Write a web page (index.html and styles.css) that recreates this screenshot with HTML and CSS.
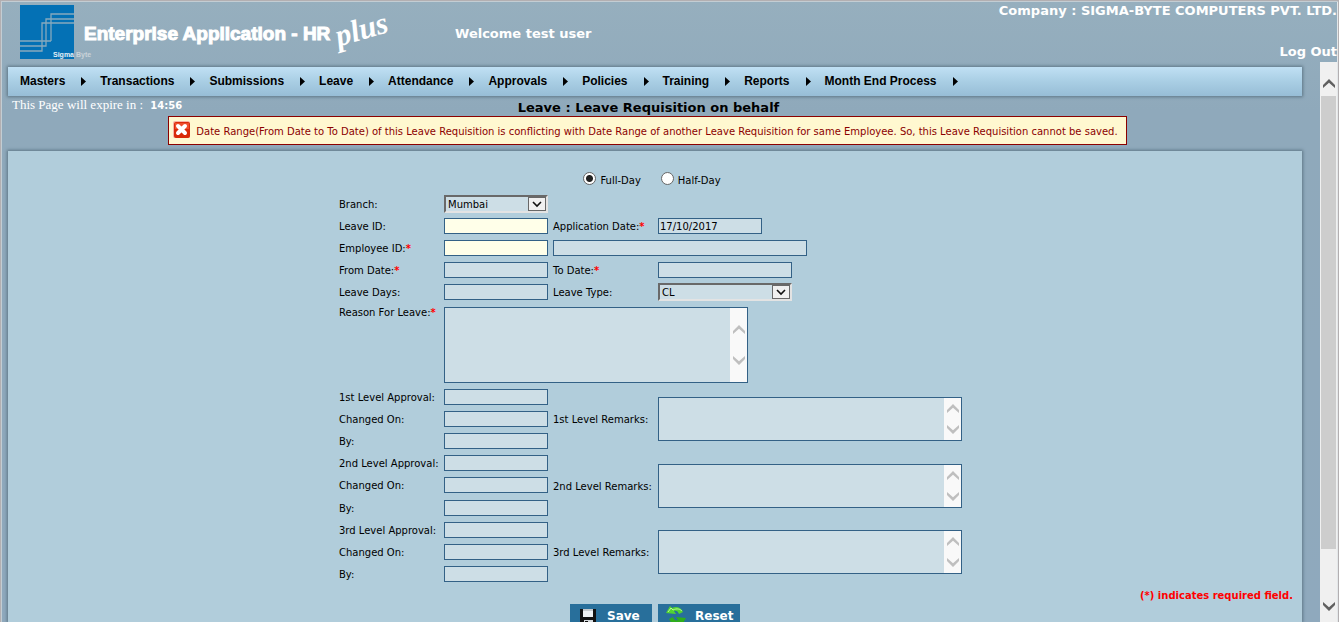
FILE: index.html
```html
<!DOCTYPE html>
<html lang="en">
<head>
<meta charset="utf-8">
<title>Leave Requisition on behalf</title>
<link rel="stylesheet" href="styles.css">
</head>
<body>
<svg class="defs" aria-hidden="true">
  <symbol id="up" viewBox="0 0 12 9"><path d="M0 6 6 0l6 6v3L6 3.800 0 9z"/></symbol>
  <symbol id="down" viewBox="0 0 12 9"><path d="M0 3 6 9l6-6V0L6 5.200 0 0z"/></symbol>
  <symbol id="arrow" viewBox="0 0 5 9"><path d="M0 0v9l5-4.500z"/></symbol>
  <symbol id="chev" viewBox="0 0 18 14"><path d="M0 0h18v14H0z" fill="#686868"/><path d="M1 1h16v12H1z" fill="#f0f0f0"/><path d="m5 5 4 4 4-4" fill="none" stroke="#111" stroke-width="1.600"/></symbol>
</svg>
<div class="frame">
  <header class="header">
    <svg class="logo" viewBox="0 0 54 54" role="img" aria-label="Sigma Byte">
      <path d="M0 0h54v54H0z" fill="#0471b5"/>
      <path d="M0 36h22V18h32M0 41h26V14h28M0 46h22V36M22 46V18M26 41V14M31 36V9h23M0 36h31" fill="none" stroke="#86a9bd" stroke-width="1.300"/>
      <text class="logo-text" x="33" y="52" fill="#e4f0f7">Sigma</text>
      <text class="logo-text" x="56" y="52" fill="#c9d3d9">Byte</text>
    </svg>
    <div class="brand">Enterprise Application - HR</div>
    <div class="plus">plus</div>
    <div class="welcome">Welcome test user</div>
    <div class="account">
      <span>Company : SIGMA-BYTE COMPUTERS PVT. LTD.</span>
      <a href="#">Log Out</a>
    </div>
  </header>
  <div class="body">
    <main class="main">
      <nav class="menu">
        <a href="#">Masters<svg><use href="#arrow"/></svg></a>
        <a href="#">Transactions<svg><use href="#arrow"/></svg></a>
        <a href="#">Submissions<svg><use href="#arrow"/></svg></a>
        <a href="#">Leave<svg><use href="#arrow"/></svg></a>
        <a href="#">Attendance<svg><use href="#arrow"/></svg></a>
        <a href="#">Approvals<svg><use href="#arrow"/></svg></a>
        <a href="#">Policies<svg><use href="#arrow"/></svg></a>
        <a href="#">Training<svg><use href="#arrow"/></svg></a>
        <a href="#">Reports<svg><use href="#arrow"/></svg></a>
        <a href="#">Month End Process<svg><use href="#arrow"/></svg></a>
      </nav>
      <div class="titlebar">
        <div class="expire">This Page will expire in : <b>14:56</b></div>
        <h1>Leave : Leave Requisition on behalf</h1>
      </div>
      <div class="alert-row">
        <div class="alert" role="alert">
          <svg class="alert-icon" viewBox="0 0 17 17"><rect width="17" height="17" rx="2" fill="#f7b2a5"/><rect x="1" y="1" width="16" height="16" rx="2" fill="#d92a08"/><path d="M2 2h14v6H2z" fill="#ee4d2b"/><path d="m5 5 7 7m0-7-7 7" stroke="#fff" stroke-width="4" stroke-linecap="round"/></svg>
          <span>Date Range(From Date to To Date) of this Leave Requisition is conflicting with Date Range of another Leave Requisition for same Employee. So, this Leave Requisition cannot be saved.</span>
        </div>
      </div>
      <form class="panel">
        <div class="radios">
          <label><input type="radio" name="day" checked>Full-Day</label>
          <label><input type="radio" name="day">Half-Day</label>
        </div>
        <div class="fields">
          <label for="branch">Branch:</label>
          <div class="select to-end"><select id="branch"><option>Mumbai</option></select><svg><use href="#chev"/></svg></div>

          <label for="lid">Leave ID:</label><input id="lid" class="cream">
          <label for="adate">Application Date:<i>*</i></label><input id="adate" value="17/10/2017">

          <label for="eid">Employee ID:<i>*</i></label><input id="eid" class="cream">
          <input class="wide" aria-label="Employee name">

          <label for="from">From Date:<i>*</i></label><input id="from">
          <label for="to">To Date:<i>*</i></label><input id="to" class="date">

          <label for="days">Leave Days:</label><input id="days">
          <label for="type">Leave Type:</label>
          <div class="select date"><select id="type"><option>CL</option></select><svg><use href="#chev"/></svg></div>

          <label for="reason" class="top">Reason For Leave:<i>*</i></label>
          <div class="area tall to-end"><textarea id="reason"></textarea><span class="bar"><svg><use href="#up"/></svg><svg><use href="#down"/></svg></span></div>

          <label for="a1">1st Level Approval:</label><input id="a1">
          <label for="r1" class="span3">1st Level Remarks:</label>
          <div class="area span3"><textarea id="r1"></textarea><span class="bar"><svg><use href="#up"/></svg><svg><use href="#down"/></svg></span></div>
          <label for="c1">Changed On:</label><input id="c1">
          <label for="b1">By:</label><input id="b1">

          <label for="a2">2nd Level Approval:</label><input id="a2">
          <label for="r2" class="span3">2nd Level Remarks:</label>
          <div class="area span3"><textarea id="r2"></textarea><span class="bar"><svg><use href="#up"/></svg><svg><use href="#down"/></svg></span></div>
          <label for="c2">Changed On:</label><input id="c2">
          <label for="b2">By:</label><input id="b2">

          <label for="a3">3rd Level Approval:</label><input id="a3">
          <label for="r3" class="span3">3rd Level Remarks:</label>
          <div class="area span3"><textarea id="r3"></textarea><span class="bar"><svg><use href="#up"/></svg><svg><use href="#down"/></svg></span></div>
          <label for="c3">Changed On:</label><input id="c3">
          <label for="b3">By:</label><input id="b3">
        </div>
        <p class="required">(*) indicates required field.</p>
        <div class="actions">
          <button type="button">
            <svg viewBox="0 0 20 20"><path d="M2 3h16v17H2z" fill="#111"/><path d="M5 3h10v8H5z" fill="#eef1f3"/><path d="M5 3h10v2H5z" fill="#c4c9cd"/><path d="M6 14h9v6H6z" fill="#d5d9dc"/><path d="M7 15h3v5H7z" fill="#111"/></svg>
            <span>Save</span>
          </button>
          <button type="button">
            <svg viewBox="0 0 20 20"><path d="M0 7 4 0l2 2c4-2 9-1 11 4l-4 2C12 5 10 4 8 5l2 3z" fill="#52d430"/><path d="M20 12l-4 7-2-2c-4 2-9 1-11-4l4-2c1 3 3 4 5 3l-2-3z" fill="#2fae1b"/><path d="M2 6l3-4 2 2c4-2 7-1 9 1" fill="none" stroke="#b9f59b"/></svg>
            <span>Reset</span>
          </button>
        </div>
      </form>
    </main>
    <div class="scroll" aria-hidden="true">
      <svg><use href="#up"/></svg>
      <span class="thumb"></span>
      <svg><use href="#down"/></svg>
    </div>
  </div>
</div>
</body>
</html>
```

FILE: styles.css
```css
* { box-sizing: border-box; }
body {
  margin: 0;
  font-family: Verdana, "DejaVu Sans", sans-serif;
  font-size: 10px;
  color: #000;
}
.defs { display: none; }
.frame {
  height: 100vh;
  display: flex;
  flex-direction: column;
  overflow: hidden;
  border: 1px solid #b3afb1;
  border-bottom: 0;
  box-shadow: inset 1px 1px #c3cdd3, inset -1px 0 #e3e7e9;
  background: linear-gradient(#96afbe, #8fa9bb 110px, #8fa9bd);
}
.header {
  flex: none;
  display: flex;
  height: 61px;
  padding: 4px 1px 0 19px;
  color: #fff;
  font-weight: bold;
  font-size: 13px;
  white-space: nowrap;
}
.logo { width: 54px; height: 54px; overflow: visible; }
.logo-text { font: bold 7px "Liberation Sans Narrow", "Liberation Sans", sans-serif; }
.brand {
  margin-left: 10px;
  width: 246px;
  line-height: 58px;
  font-family: Impact, "Liberation Sans Narrow", "Liberation Sans", sans-serif;
  font-size: 19px;
  -webkit-text-stroke: 1px #fff;
}
.plus {
  width: 56px;
  margin-left: 6px;
  line-height: 48px;
  font-family: "Brush Script MT", "Liberation Serif", serif;
  font-style: italic;
  font-size: 31px;
  transform: rotate(-16deg);
}
.welcome { margin-left: 63px; line-height: 57px; }
.account {
  margin-left: auto;
  display: flex;
  flex-direction: column;
  align-items: flex-end;
  gap: 25px;
  line-height: 16px;
  margin-top: -2px;
}
.account a { color: inherit; text-decoration: none; }
.body { flex: 1; min-height: 0; display: flex; }
.main {
  flex: 1;
  min-width: 0;
  display: flex;
  flex-direction: column;
  padding: 5px 18px 0 7px;
}
.menu {
  flex: none;
  display: flex;
  gap: 14px;
  height: 29px;
  padding-left: 12px;
  background: linear-gradient(#c0e0f4, #a9cee4 50%, #97bdd6);
  box-shadow: 0 0 3px 1px #5d7686;
  font: bold 12px/28px "Liberation Sans", Arial, sans-serif;
  white-space: nowrap;
}
.menu a { color: #000; text-decoration: none; display: flex; align-items: center; height: 28px; }
.menu svg { width: 5px; height: 9px; margin-left: 16px; }
.titlebar {
  flex: none;
  display: grid;
  grid-template-columns: 1fr auto 1fr;
  height: 20px;
  padding: 0 17px 0 4px;
}
.expire {
  color: #fff;
  font: 13px/18px "Liberation Serif", "Times New Roman", serif;
}
.expire b { margin-left: 4px; font: bold 10px "DejaVu Sans", sans-serif; }
h1 { margin: 0; font-size: 13px; line-height: 24px; }
.alert-row { flex: none; display: flex; justify-content: center; padding-right: 15px; }
.alert {
  display: flex;
  gap: 6px;
  height: 29px;
  padding: 4px 8px 0 4px;
  border: 1px solid #8b0000;
  background: #fff8d0;
  color: #8b0000;
  line-height: 22px;
  white-space: nowrap;
}
.alert-icon { width: 17px; height: 17px; flex: none; }
.panel {
  flex: 1;
  min-height: 0;
  margin-top: 6px;
  padding: 20px 9px 0;
  overflow: hidden;
  background: #b1cddb;
  box-shadow: 0 0 3px 1px #5d7686;
}
.radios { display: flex; justify-content: center; gap: 20px; height: 22px; margin-right: 6px; }
.radios label { display: flex; line-height: 20px; }
.radios input {
  appearance: none;
  width: 13px;
  height: 13px;
  margin: 1px 4px 0 0;
  border: 1px solid #666;
  border-radius: 50%;
  background: #fff;
}
.radios input:checked { background: radial-gradient(circle, #222 3px, #fff 4px); }
.fields {
  display: grid;
  grid-template-columns: 105px 109px 105px 313px;
  grid-template-rows: repeat(5, 22px) 83px repeat(5, 22px) 23px repeat(3, 22px);
  justify-content: center;
  align-items: center;
}
.fields label { padding-top: 2px; line-height: 14px; white-space: nowrap; }
.fields i { color: #f00; font-style: normal; font-weight: bold; }
.fields input {
  width: 104px;
  height: 16px;
  padding: 0 1px;
  border: 1px solid #336186;
  background: #cddee6;
  font: inherit;
  color: #000;
}
.fields .cream { background: #ffffe9; }
.fields .wide { grid-column: 3 / 5; width: 254px; }
.fields .date { width: 134px; }
.to-end { grid-column: 2 / 5; }
.span3 { grid-row: span 3; }
.fields .top { align-self: start; padding-top: 3px; }
.select { position: relative; width: 104px; height: 18px; }
.select select {
  appearance: none;
  display: block;
  width: 100%;
  height: 18px;
  padding: 0 2px;
  border: 2px solid;
  border-color: #696969 #e3e3e3 #e3e3e3 #696969;
  border-radius: 0;
  background: #cddee6;
  font: inherit;
  color: #000;
}
.select svg { position: absolute; top: 2px; right: 2px; width: 18px; height: 14px; }
.area {
  display: flex;
  width: 304px;
  height: 44px;
  border: 1px solid #336186;
  background: #cddee6;
}
.area.tall { height: 76px; }
.area textarea {
  flex: 1;
  min-width: 0;
  border: 0;
  padding: 2px;
  resize: none;
  background: none;
  font: inherit;
}
.bar {
  width: 17px;
  display: flex;
  flex-direction: column;
  align-items: center;
  justify-content: center;
  gap: 12px;
  background: #f9f9f9;
  fill: #bfbfbf;
}
.tall .bar { gap: 22px; }
.bar svg, .scroll svg { width: 12px; height: 9px; }
.required {
  margin: 3px 0 0;
  text-align: right;
  line-height: 16px;
  font-weight: bold;
  color: #f00;
}
.actions { display: flex; justify-content: center; gap: 6px; }
.actions button {
  display: flex;
  align-items: center;
  gap: 9px;
  height: 24px;
  width: 82px;
  padding: 0 8px;
  border: 0;
  border-radius: 0;
  background: #286f9b;
  color: #fff;
  font: bold 12px "DejaVu Sans", sans-serif;
}
.actions svg { width: 20px; height: 20px; flex: none; }
.scroll {
  flex: none;
  width: 17px;
  display: flex;
  flex-direction: column;
  align-items: center;
  gap: 8px;
  padding: 17px 0 11px;
  margin-right: 1px;
  background: #f0f0f0;
  fill: #606060;
}
.thumb { width: 15px; flex: 1; background: #cdcdcd; margin-bottom: 45px; }
```
